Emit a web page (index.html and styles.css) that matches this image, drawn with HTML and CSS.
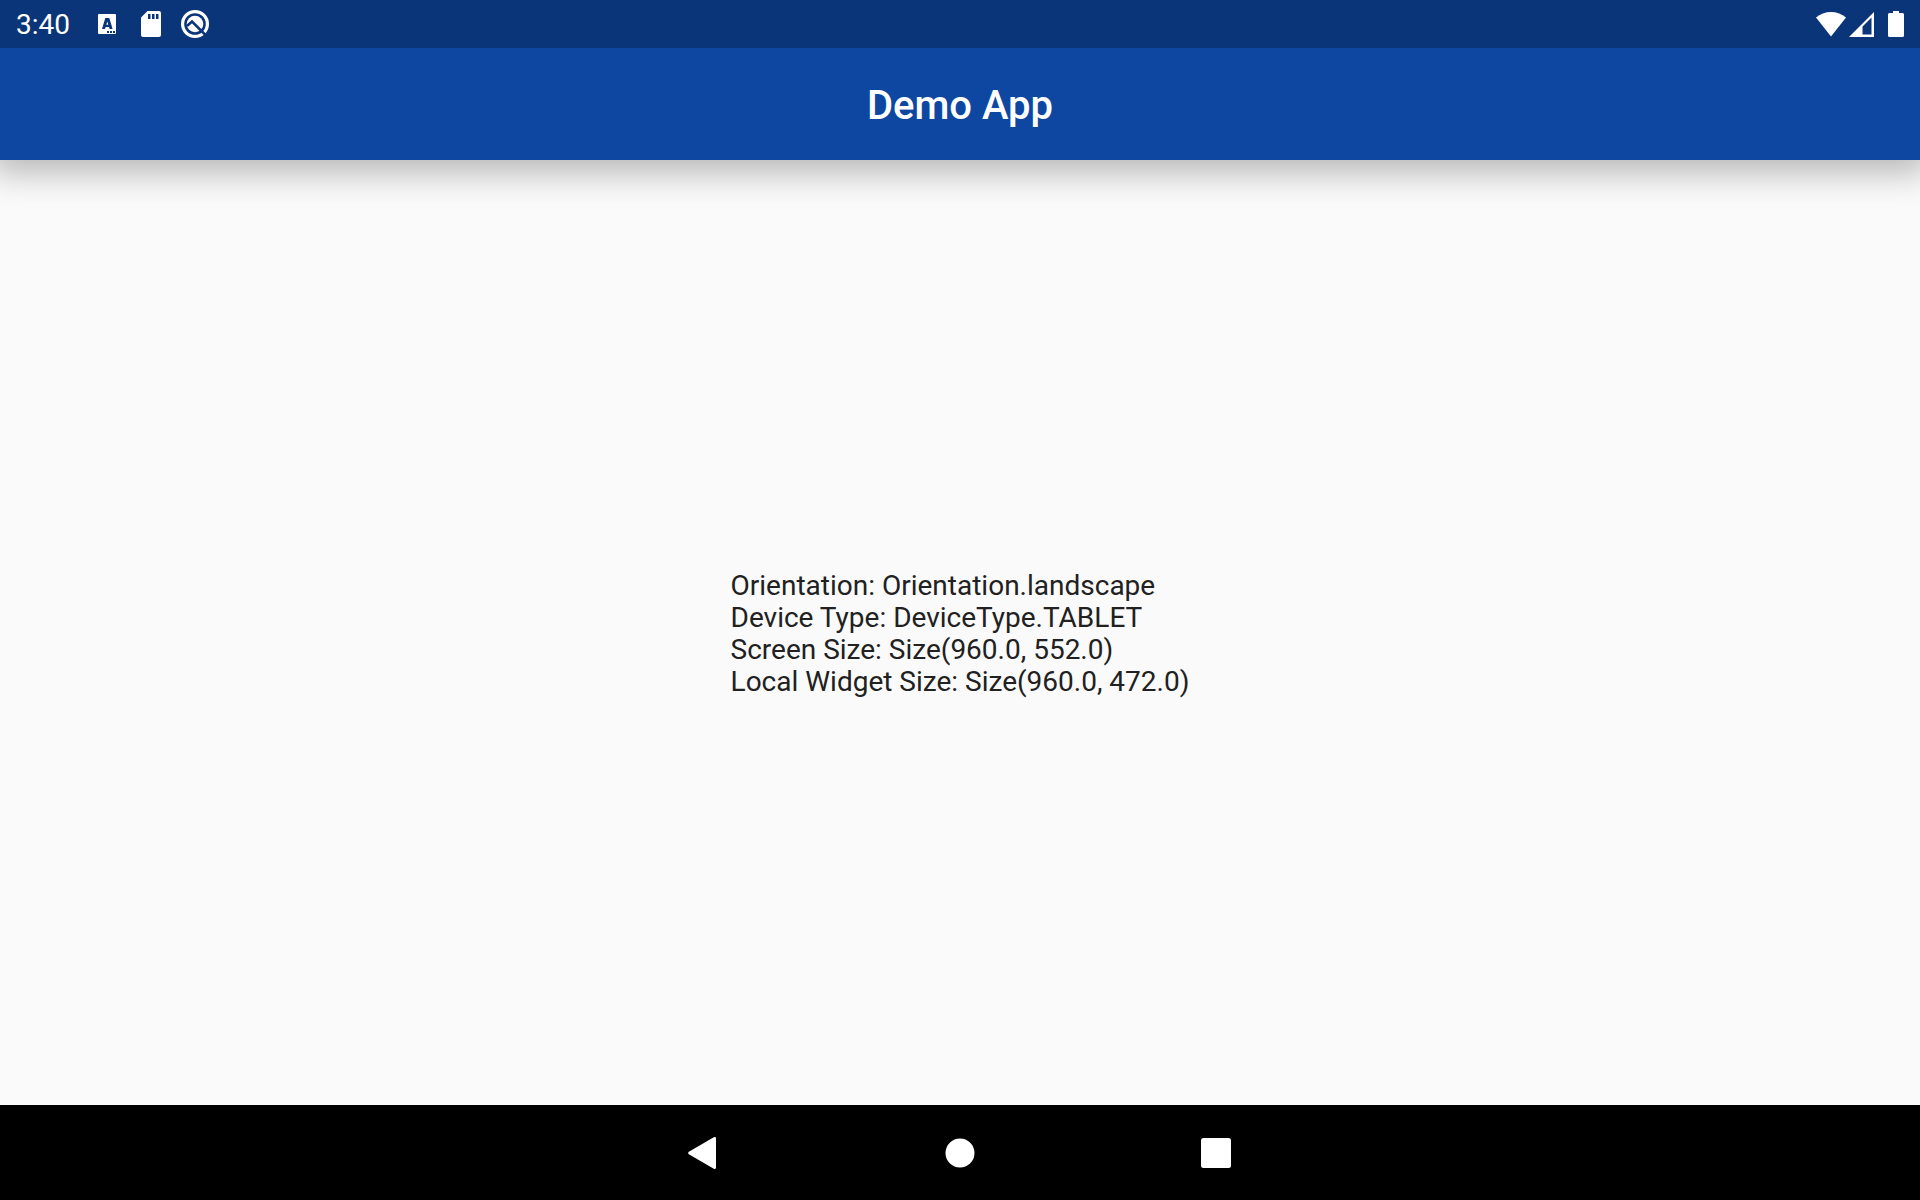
FILE: index.html
```html
<!DOCTYPE html>
<html lang="en">
<head>
<meta charset="utf-8">
<meta name="viewport" content="width=device-width, initial-scale=1">
<title>Demo App</title>
<link rel="stylesheet" href="styles.css">
</head>
<body>
<div class="status-bar">
  <div class="notifications">
    <time class="clock">3:40</time>
    <svg class="status-icon" viewBox="0 0 28 28" aria-hidden="true">
      <path fill="currentColor" fill-rule="evenodd" d="M5 4h16a1 1 0 0 1 1 1v18a1 1 0 0 1-1 1H5a1 1 0 0 1-1-1V5a1 1 0 0 1 1-1zM11.300 8 8 19h3l.6-2h3.400l.6 2h3L15.300 8zM13.300 11.500l1 3.300h-2zM13 21v2h2v-2zm3 0v2h2v-2zm3 0v2h2v-2z"/>
    </svg>
    <svg class="status-icon" viewBox="0 0 28 28" aria-hidden="true">
      <path fill="currentColor" fill-rule="evenodd" d="M9.500 1H21a2 2 0 0 1 2 2v22a2 2 0 0 1-2 2H5a2 2 0 0 1-2-2V7.500zM10 4v5h2.500V4zm4 0v5h2.500V4zm4 0v5h2.500V4z"/>
    </svg>
    <svg class="status-icon" viewBox="0 0 28 28" aria-hidden="true">
      <circle cx="13" cy="14" r="12.400" fill="none" stroke="currentColor" stroke-width="3.200"/>
      <circle cx="13" cy="14" r="8.300" fill="currentColor"/>
      <path fill="none" stroke="#0a3578" stroke-width="2.500" d="M5 16 10 11.500 24.500 26"/>
    </svg>
  </div>
  <div class="indicators">
    <svg class="wifi" viewBox="0 0 30 26" role="img" aria-label="Wi-Fi">
      <path fill="currentColor" d="M0 6.500C8-1 22-1 30 6.500L15 25.500z"/>
    </svg>
    <svg class="signal" viewBox="0 0 25 26" role="img" aria-label="Mobile signal">
      <path fill="currentColor" fill-rule="evenodd" d="M25 1v25H0zM22.500 6.500 13.500 15.500v8h9z"/>
    </svg>
    <svg class="battery" viewBox="0 0 16 26" role="img" aria-label="Battery full">
      <path fill="currentColor" d="M5 0h6v2h3.500Q16 2 16 3.500v21q0 1.500-1.500 1.500h-13Q0 26 0 24.500v-21Q0 2 1.500 2H5z"/>
    </svg>
  </div>
</div>
<header class="app-bar"><h1 class="title">Demo App</h1></header>
<main class="content">
  <p class="details">Orientation: Orientation.landscape<br>Device Type: DeviceType.TABLET<br>Screen Size: Size(960.0, 552.0)<br>Local Widget Size: Size(960.0, 472.0)</p>
</main>
<nav class="nav-bar" aria-label="System navigation">
  <button class="nav-button" type="button" aria-label="Back">
    <svg class="nav-icon" viewBox="0 0 32 32" aria-hidden="true"><path fill="currentColor" d="M.8 14.700 25.800.3Q28 -.5 28 1.500v29q0 2-2.200 1.200L.8 17.300Q-.8 16 .8 14.700z"/></svg>
  </button>
  <button class="nav-button" type="button" aria-label="Home">
    <svg class="nav-icon" viewBox="0 0 32 32" aria-hidden="true"><circle cx="16" cy="16" r="14.500" fill="currentColor"/></svg>
  </button>
  <button class="nav-button" type="button" aria-label="Recent apps">
    <svg class="nav-icon" viewBox="0 0 32 32" aria-hidden="true"><rect x="1" y="1" width="30" height="30" rx="2.500" fill="currentColor"/></svg>
  </button>
</nav>
</body>
</html>
```
FILE: styles.css
```css
* { box-sizing: border-box; }

body {
  display: flex;
  flex-direction: column;
  min-height: 100vh;
  margin: 0;
  background: #fafafa;
  color: #212121;
  font-family: Roboto, "Liberation Sans", sans-serif;
}

svg {
  display: block;
  overflow: visible;
}

.status-bar {
  position: relative;
  z-index: 1;
  display: flex;
  justify-content: space-between;
  align-items: center;
  height: 48px;
  padding: 0 16px;
  background: #0a3578;
  color: #fff;
}

.notifications,
.indicators {
  display: flex;
  align-items: center;
}

.notifications { gap: 16px; }

.clock {
  margin-right: 8px;
  padding-top: 2px;
  font-size: 28px;
  line-height: 32px;
}

.status-icon {
  width: 28px;
  height: 28px;
}

.wifi { width: 30px; height: 26px; }
.signal { width: 25px; height: 26px; margin: 0 14px 0 3px; }
.battery { width: 16px; height: 26px; }

.app-bar {
  display: flex;
  justify-content: center;
  align-items: center;
  height: 112px;
  padding-top: 4px;
  background: #0d47a1;
  color: #fff;
  box-shadow: 0 4px 32px 8px rgba(0, 0, 0, 0.28);
}

.title {
  margin: 0;
  font-size: 40px;
  font-weight: 500;
  line-height: 48px;
}

.content {
  display: flex;
  flex: 1;
  justify-content: center;
  align-items: center;
  padding-top: 2px;
}

.details {
  margin: 0;
  font-size: 28px;
  line-height: 32px;
}

.nav-bar {
  display: flex;
  justify-content: center;
  height: 95px;
  background: #000;
}

.nav-button {
  display: flex;
  justify-content: center;
  align-items: center;
  width: 256px;
  padding: 0;
  border: 0;
  background: none;
  color: #fff;
}

.nav-icon {
  width: 32px;
  height: 32px;
}
```
